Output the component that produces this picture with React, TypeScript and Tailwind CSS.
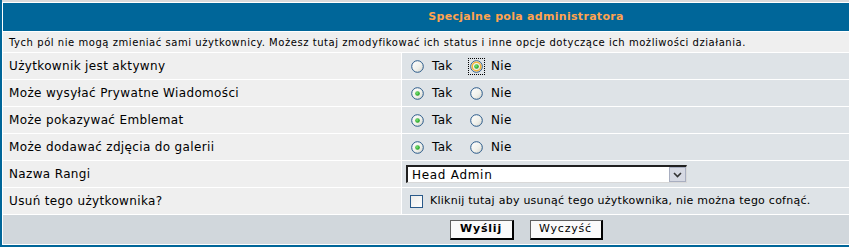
import React from "react";

function Radio({ checked = false, focus = false }: { checked?: boolean; focus?: boolean }) {
  return (
    <span className="relative inline-flex w-[13px] h-[13px] shrink-0">
      <svg width="13" height="13" viewBox="0 0 13 13">
        <defs>
          <linearGradient id="rg" x1="0" y1="0" x2="1" y2="1">
            <stop offset="0" stopColor="#ffffff" />
            <stop offset="0.6" stopColor="#f0f0ea" />
            <stop offset="1" stopColor="#cfcfc8" />
          </linearGradient>
          <radialGradient id="gd" cx="0.4" cy="0.4" r="0.6">
            <stop offset="0" stopColor="#7ee87a" />
            <stop offset="1" stopColor="#1c9a1c" />
          </radialGradient>
        </defs>
        <circle cx="6.5" cy="6.5" r="5.8" fill="url(#rg)" stroke="#2a5a8a" strokeWidth="1" />
        {focus && <circle cx="6.5" cy="6.5" r="4.3" fill="none" stroke="#f5b33c" strokeWidth="1.6" />}
        {checked && <circle cx="6.5" cy="6.5" r="2.3" fill="url(#gd)" />}
      </svg>
      {focus && (
        <span className="absolute -left-[2px] -top-[2px] w-[17px] h-[17px] border border-dotted border-black" />
      )}
    </span>
  );
}

function YesNo({ yes }: { yes: boolean }) {
  return (
    <div className="flex items-center pl-[9px]">
      <div className="w-[59px] flex items-center">
        <Radio checked={yes} />
        <span className="ml-[8px] text-[12px] tracking-[0.3px]">Tak</span>
      </div>
      <div className="flex items-center">
        <Radio checked={!yes} focus={!yes} />
        <span className="ml-[8px] text-[12px] tracking-[0.3px]">Nie</span>
      </div>
    </div>
  );
}

function Row({ label, children }: { label: string; children: React.ReactNode }) {
  return (
    <div className="flex gap-px h-[26px]">
      <div className="w-[398px] bg-[#EFEFEF] flex items-center pl-[6px] text-[12px] tracking-[0.35px] text-black">{label}</div>
      <div className="flex-1 bg-[#DEE3E7] flex items-center">{children}</div>
    </div>
  );
}

export default function App() {
  return (
    <div className="w-[849px] h-[250px] overflow-hidden bg-white text-black font-['DejaVu_Sans',Verdana,sans-serif]">
      <div className="w-[1052px] border-l-2 border-r-2 border-b-2 border-[#006699] bg-white flex flex-col gap-px pl-px pr-px pb-px">
        <div className="h-[2px] bg-[#dadada] -ml-px" />
        <div className="h-[28px] bg-[#006699] flex items-center justify-center text-[11px] font-bold tracking-[0.3px] text-[#FFA34F]">
          Specjalne pola administratora
        </div>
        <div className="h-[20px] bg-[#EFEFEF] flex items-center pl-[6px] text-[10px] tracking-[0.55px]">
          Tych pól nie mogą zmieniać sami użytkownicy. Możesz tutaj zmodyfikować ich status i inne opcje dotyczące ich możliwości działania.
        </div>
        <Row label="Użytkownik jest aktywny">
          <YesNo yes={false} />
        </Row>
        <Row label="Może wysyłać Prywatne Wiadomości">
          <YesNo yes={true} />
        </Row>
        <Row label="Może pokazywać Emblemat">
          <YesNo yes={true} />
        </Row>
        <Row label="Może dodawać zdjęcia do galerii">
          <YesNo yes={true} />
        </Row>
        <Row label="Nazwa Rangi">
          <div className="ml-[4px] w-[281px] h-[18px] flex bg-white border-t-2 border-l-2 border-t-[#202020] border-l-[#202020] border-r border-b border-r-[#d8d8d8] border-b-[#d8d8d8]">
            <div className="flex-1 flex items-center pl-[4px] text-[12px] tracking-[0.7px]">Head Admin</div>
            <div className="w-[17px] h-full bg-[#d6d9e3] border border-[#a8aec0] flex items-center justify-center">
              <svg width="9" height="6" viewBox="0 0 9 6">
                <path d="M1 1 L4.5 4.5 L8 1" fill="none" stroke="#333" strokeWidth="1.6" />
              </svg>
            </div>
          </div>
        </Row>
        <Row label="Usuń tego użytkownika?">
          <div className="flex items-center pl-[8px]">
            <span className="w-[13px] h-[13px] border border-[#2a5a8a] bg-gradient-to-br from-[#ececea] to-[#ffffff] shrink-0" />
            <span className="ml-[7px] text-[11px] tracking-[0.25px]">Kliknij tutaj aby usunąć tego użytkownika, nie można tego cofnąć.</span>
          </div>
        </Row>
        <div className="h-[29px] bg-[#D1D7DC] flex items-center justify-center gap-[16px]">
          <button className="w-[64px] h-[20px] bg-[#fafafa] border border-t-[#606060] border-l-[#606060] border-r-2 border-b-2 border-r-black border-b-black text-[11px] font-bold flex items-center justify-center tracking-[0.8px]">
            Wyślij
          </button>
          <button className="w-[73px] h-[20px] bg-[#fafafa] border border-t-[#606060] border-l-[#606060] border-r-2 border-b-2 border-r-black border-b-black text-[11px] flex items-center justify-center tracking-[0.8px]">
            Wyczyść
          </button>
        </div>
      </div>
    </div>
  );
}
